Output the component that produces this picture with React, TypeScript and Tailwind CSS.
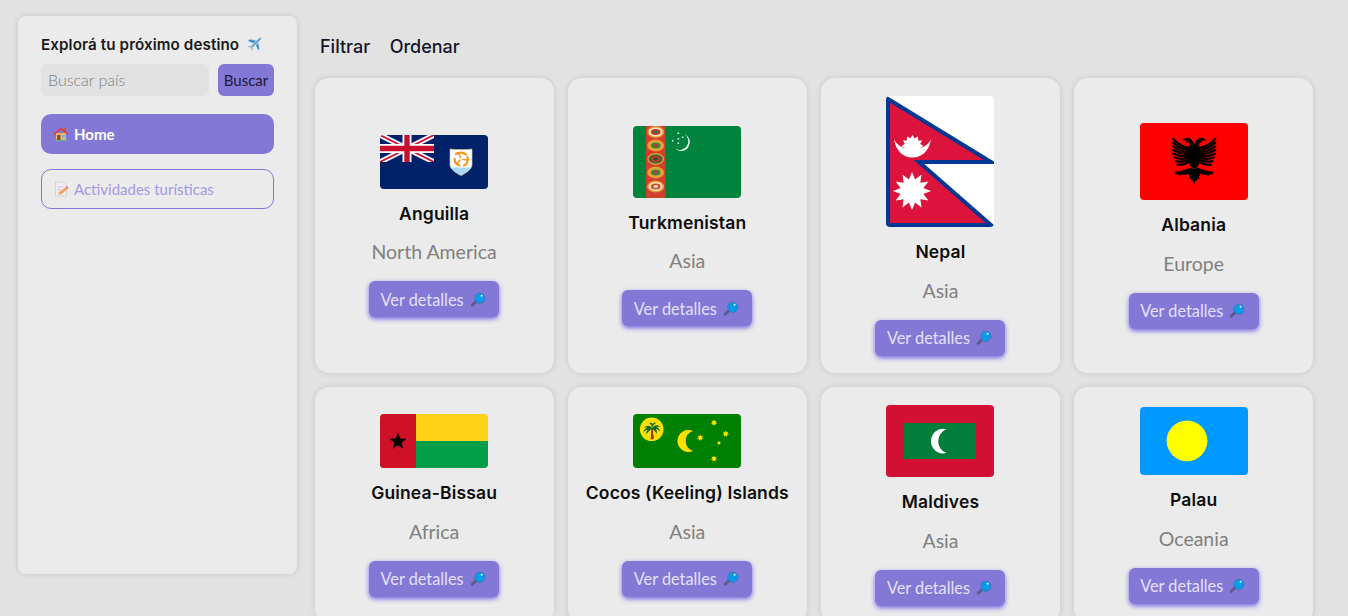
import React from "react";

const Plane = () => (
  <svg viewBox="0 0 20 20" className="w-[18px] h-[18px] shrink-0">
    <path d="M16.500 2.200c1-.6 2-.3 1.400 1L15 6.300l1.300 8.200-1.500 1.300-2.700-6.600-3.600 3.400.3 3-1.100 1-1.700-3.100-3.100-1.700 1-1.100 3 .3 3.400-3.600-6.600-2.700 1.300-1.500 8.200 1.300z" fill="#a9c4d6" />
    <path d="M16.500 2.200c1-.6 2-.3 1.400 1L8 12.900 6.800 11.800z" fill="#5b9fd0" />
    <path d="M11.200 5.200 5 4.200 3.600 5.500 9.400 8zM14.600 8.600l.9 6-1 1-2.200-5.300z" fill="#2f8fd0" />
  </svg>
);
const House = () => (
  <svg viewBox="0 0 16 16" className="w-4 h-4 shrink-0">
    <rect x="11" y="2" width="2" height="4" fill="#c9503c" />
    <rect x="3" y="7" width="10" height="7" fill="#f4b66e" />
    <rect x="2" y="13.600" width="12" height="1.400" fill="#5fb98c" />
    <rect x="4.200" y="9" width="3.200" height="5" fill="#7a4a2a" />
    <rect x="9" y="9" width="3" height="2.600" fill="#69b7e0" />
    <path d="M8 1.500 15.500 8l-1 1L8 3.600 1.500 9l-1-1z" fill="#e2392f" />
  </svg>
);
const Memo = () => (
  <svg viewBox="0 0 16 16" className="w-4 h-4 shrink-0 opacity-80">
    <path d="M2.500 1h8l3 3v11h-11z" fill="#f4edf2" stroke="#c9bfd0" strokeWidth="0.7" />
    <path d="M4.500 6h6M4.500 8.500h4M4.500 11h3" stroke="#b9a9c2" strokeWidth="0.8" />
    <path d="M5.500 14l.8-2.800 6.200-5 1.800 2-6 5z" fill="#f4902e" />
    <path d="M12.700 6l1-.9 1.800 2-1 1z" fill="#f0385a" />
  </svg>
);
const Lens = () => (
  <svg viewBox="0 0 16 16" className="w-4 h-4 shrink-0">
    <path d="M6 9.500 2.300 13.200" stroke="#5c5a8e" strokeWidth="3" strokeLinecap="round" />
    <circle cx="9.800" cy="6.200" r="5.200" fill="#0a9be8" />
    <circle cx="9.800" cy="6.200" r="5.200" fill="none" stroke="#5c5a8e" strokeWidth="0.5" />
    <circle cx="11.600" cy="3.800" r="1" fill="#d9f3ff" />
  </svg>
);

const Star = ({ cx, cy, r, n = 5, inner = 0.42, fill }: { cx: number; cy: number; r: number; n?: number; inner?: number; fill: string }) => {
  const pts: string[] = [];
  for (let i = 0; i < n * 2; i++) {
    const a = (Math.PI * i) / n - Math.PI / 2;
    const q = i % 2 ? r * inner : r;
    pts.push(`${cx + q * Math.cos(a)},${cy + q * Math.sin(a)}`);
  }
  return <polygon points={pts.join(" ")} fill={fill} />;
};

const Svg = ({ h, children }: { h: number; children: React.ReactNode }) => (
  <svg viewBox={`0 0 108 ${h}`} width={108} height={h} className="block rounded-[4px] shrink-0">
    {children}
  </svg>
);

const Anguilla = () => (
  <Svg h={54}>
    <rect width="108" height="54" fill="#012169" />
    <svg x="0" y="0" width="54" height="27" viewBox="0 0 54 27">
      <path d="M0 0 54 27M54 0 0 27" stroke="#fff" strokeWidth="5.400" />
      <path d="M0 0 54 27M54 0 0 27" stroke="#c8102e" strokeWidth="1.800" />
      <path d="M27 0v27M0 13.500h54" stroke="#fff" strokeWidth="9" />
      <path d="M27 0v27M0 13.500h54" stroke="#c8102e" strokeWidth="5.400" />
    </svg>
    <path d="M70 14c4 .8 18 .8 22 0v16c0 4-6 8-11 10.500C76 38 70 34 70 30z" fill="#fff" stroke="#c9c08a" strokeWidth="0.7" />
    <path d="M71 32.500h20c-1.500 3-6 6-10 7.800-4-1.800-8.500-4.800-10-7.800z" fill="#a9d8f4" />
    <g fill="none" stroke="#f7941d" strokeLinecap="round">
      <path d="M76 19c3-2 8-2 10 .5M87.500 22c1 3.500-.5 7-3.500 8.500M79.500 30.500c-3-.5-5-3.500-4.800-6.500" strokeWidth="2.200" />
      <path d="M78 17.500l2.500 5M88 25l-5-.5M77 29l3-4" strokeWidth="1.500" />
    </g>
  </Svg>
);

const guls = [
  { y: 6, a: "#f3e3c3", b: "#c9352b", c: "#2d7a46" },
  { y: 19.5, a: "#e8a33d", b: "#2d8a3e", c: "#c9352b" },
  { y: 33, a: "#2d6a3e", b: "#c9352b", c: "#1d5a30" },
  { y: 46.5, a: "#e8a33d", b: "#2d8a3e", c: "#c9352b" },
  { y: 60.5, a: "#f3e3c3", b: "#d9472b", c: "#f3e3c3" },
];

const Turkmenistan = () => (
  <Svg h={72}>
    <rect width="108" height="72" fill="#00843d" />
    <rect x="13" width="19.500" height="72" fill="#d0402c" />
    {guls.map(({ y, a, b, c }) => (
      <g key={y}>
        <ellipse cx="22.700" cy={y} rx="8.500" ry="6" fill="#e89a2e" />
        <ellipse cx="22.700" cy={y} rx="7" ry="4.600" fill={a} />
        <ellipse cx="22.700" cy={y} rx="4.800" ry="3" fill={b} />
        <ellipse cx="22.700" cy={y} rx="2.400" ry="1.400" fill={c} />
      </g>
    ))}
    <path d="M51.500 8a8.800 8.800 0 1 1-9.500 14.500A8.500 8.500 0 0 0 51.500 8z" fill="#fff" />
    {[[45.300, 7.300], [39.700, 14.700], [49.700, 11.300], [45.300, 13], [45.300, 17.300]].map(([x, y]) => (
      <Star key={`${x}-${y}`} cx={x} cy={y} r={1.300} fill="#fff" />
    ))}
  </Svg>
);

const Nepal = () => (
  <Svg h={131}>
    <rect width="108" height="131" fill="#fff" />
    <path d="M2 3 105 66H33l72 63H2z" fill="#dc143c" stroke="#003893" strokeWidth="4" strokeLinejoin="miter" />
    <Star cx={26.500} cy={50} r={11} n={12} inner={0.72} fill="#fff" />
    <path d="M8 43c2 13 10 18.500 18.500 18.500S43 56 45 43c-3 7-10 10-18.500 10S11 50 8 43z" fill="#fff" />
    <Star cx={26} cy={95} r={19} n={12} inner={0.62} fill="#fff" />
  </Svg>
);

const wing = [0, 1, 2, 3, 4, 5, 6, 7];
const EagleHalf = () => (
  <g fill="#000" stroke="none">
    {wing.map((i) => (
      <path
        key={i}
        d={`M57 ${25 + i * 1.800}Q${67 - i * 0.300} ${25 + i * 2.500} ${75.200 - (i > 4 ? (i - 4) * 1.500 : 0)} ${16 + i * 3.700}`}
        fill="none"
        stroke="#000"
        strokeWidth="2.300"
        strokeLinecap="round"
      />
    ))}
    <path d="M54 23c1-5 3-7.500 7-8 2 0 3.500.5 5 2l-4.500.8.5 1.700-2.500 0c-.5 2-1 5-1.500 7l-4 3z" />
    <path d="M54 22h4l1 20-5 4z" />
    <path d="M56 44c4 2 9 3 12 4l7 1-3 1 2 2-4-1-1 2-3-1.500-3 .5-3-1.500-1 3-3.500-3z" />
    <path d="M54 46h4l1 4 1 1.500-1 1.500 .5 3-2-.5-.5 2.500-1.500-.5L54 62z" />
  </g>
);
const Albania = () => (
  <Svg h={77}>
    <rect width="108" height="77" fill="#f00" />
    <EagleHalf />
    <g transform="translate(108.400 0) scale(-1 1)">
      <EagleHalf />
    </g>
  </Svg>
);

const Guinea = () => (
  <Svg h={54}>
    <rect width="108" height="54" fill="#fcd116" />
    <rect y="27" width="108" height="27" fill="#009e49" />
    <rect width="36" height="54" fill="#ce1126" />
    <Star cx={18} cy={27.500} r={9} fill="#000" />
  </Svg>
);

const Cocos = () => (
  <Svg h={54}>
    <rect width="108" height="54" fill="#008000" />
    <circle cx="18.700" cy="15.300" r="11.800" fill="#ffe000" />
    <path d="M17.500 25.500c.5-4 1-7 .5-11h2c0 4 .5 7 1 10.500z" fill="#8a3d0c" />
    <path d="M19 14c-2-3-6-3-8 0 2-1 3-1 3.500-.5-2 .5-4 2.500-4 5 1.500-2 3-3 4-3-1 1.500-1.500 3-1 5 1-2.500 3-4 5-5.500zM19 14c2-3 6-4 8-1-2-.5-3-.5-3.500 0 2 .5 3.500 2.500 3.500 4.500-1.500-2-3-2.500-4-2.500 1 1.500 1 3 .5 5-1-2.500-2.500-4-4.500-5.500zM19 14c0-2-1-4-3-5 2-.5 3 0 3.500 1 .5-1 2-1.500 3.500-1-2 1-3.500 3-4 5z" fill="#0a6b2b" />
    <path d="M60 17a11 11 0 1 0 0 20 10.500 10.500 0 0 1 0-20z" fill="#ffe000" />
    <Star cx={67.300} cy={23.700} r={3.400} n={7} inner={0.5} fill="#ffe000" />
    <Star cx={81} cy={8.700} r={3.400} n={7} inner={0.5} fill="#ffe000" />
    <Star cx={92.700} cy={19.700} r={3.400} n={7} inner={0.5} fill="#ffe000" />
    <Star cx={86} cy={29} r={2.200} n={5} inner={0.5} fill="#ffe000" />
    <Star cx={81} cy={44.700} r={3.400} n={7} inner={0.5} fill="#ffe000" />
  </Svg>
);

const Maldives = () => (
  <Svg h={72}>
    <rect width="108" height="72" fill="#d21034" />
    <rect x="18" y="18" width="72" height="36" fill="#007e3a" />
    <path d="M60.500 24.300a12.300 12.300 0 1 0 0 23.700 12.600 12.600 0 0 1 0-23.700z" fill="#fff" />
  </Svg>
);

const Palau = () => (
  <Svg h={68}>
    <rect width="108" height="68" fill="#0099ff" />
    <circle cx="47" cy="33.800" r="20.400" fill="#ff0" />
  </Svg>
);

const countries = [
  { name: "Anguilla", region: "North America", Flag: Anguilla },
  { name: "Turkmenistan", region: "Asia", Flag: Turkmenistan },
  { name: "Nepal", region: "Asia", Flag: Nepal },
  { name: "Albania", region: "Europe", Flag: Albania },
  { name: "Guinea-Bissau", region: "Africa", Flag: Guinea },
  { name: "Cocos (Keeling) Islands", region: "Asia", Flag: Cocos },
  { name: "Maldives", region: "Asia", Flag: Maldives },
  { name: "Palau", region: "Oceania", Flag: Palau },
];

export default function App() {
  return (
    <div className="h-screen overflow-hidden bg-[#e2e2e2] flex items-start font-['Lato','Liberation_Sans',sans-serif]">
      <aside className="w-[279px] h-[558px] mt-4 ml-[18px] shrink-0 rounded-lg bg-[#ebebeb] shadow-[0_0_6px_rgba(0,0,0,0.12)] px-[23px] pt-5">
        <div className="flex items-center gap-[6px] h-[18px] text-[15.200px] font-semibold text-[#1a1a1a] font-['Inter',sans-serif] tracking-[0.1px] whitespace-nowrap">
          <span>Explorá tu próximo destino</span>
          <Plane />
        </div>
        <div className="flex gap-[9px] mt-[10px] w-[233px]">
          <div className="flex-1 h-8 rounded-md bg-[#e2e2e2] flex items-center px-[7px] text-[16px] font-light text-[#808080]">Buscar país</div>
          <button className="w-14 h-8 rounded-md bg-[#8378d6] text-[15px] text-[#1d1a3a]">Buscar</button>
        </div>
        <div className="mt-[18px] h-10 w-[233px] rounded-[10px] bg-[#8378d6] flex items-center gap-[5px] px-3 text-[15px] font-bold text-white">
          <House />
          <span>Home</span>
        </div>
        <div className="mt-[15px] h-10 w-[233px] rounded-[10px] border border-[#8378d6] flex items-center gap-[5px] pl-[11px] pr-3 text-[15px] text-[#a398e4]">
          <Memo />
          <span>Actividades turísticas</span>
        </div>
      </aside>
      <main className="ml-[17.500px] w-[998.800px] shrink-0">
        <div className="flex gap-[19.500px] pl-[5.500px] h-[78.300px] pt-[38px] text-[18px] font-medium text-[#14142b] font-['Inter',sans-serif]">
          <span className="leading-[18px]">Filtrar</span>
          <span className="leading-[18px]">Ordenar</span>
        </div>
        <div className="grid grid-cols-4 gap-x-[14px] gap-y-[14px]">
          {countries.map(({ name, region, Flag }) => (
            <article key={name} className="rounded-[14px] bg-[#ebebeb] shadow-[0_0_6px_rgba(0,0,0,0.12)] px-3 pt-[18px] pb-[17.500px] flex flex-col items-center justify-center">
              <Flag />
              <h2 className="mt-[14px] leading-[22px] text-[17.500px] tracking-[0.15px] font-semibold text-[#0d0d0d] font-['Inter',sans-serif] whitespace-nowrap">{name}</h2>
              <p className="mt-[15.500px] leading-[24px] text-[19.500px] text-[#808080]">{region}</p>
              <button className="mt-[17px] w-[130px] h-9 rounded-md bg-[#8378d6] shadow-[0_2px_5px_#7468e6] flex items-center justify-center gap-[6px] pr-[2px] pt-[1px] text-[16.300px] text-[#e4e0fa]">
                <span>Ver detalles</span>
                <Lens />
              </button>
            </article>
          ))}
        </div>
      </main>
    </div>
  );
}
